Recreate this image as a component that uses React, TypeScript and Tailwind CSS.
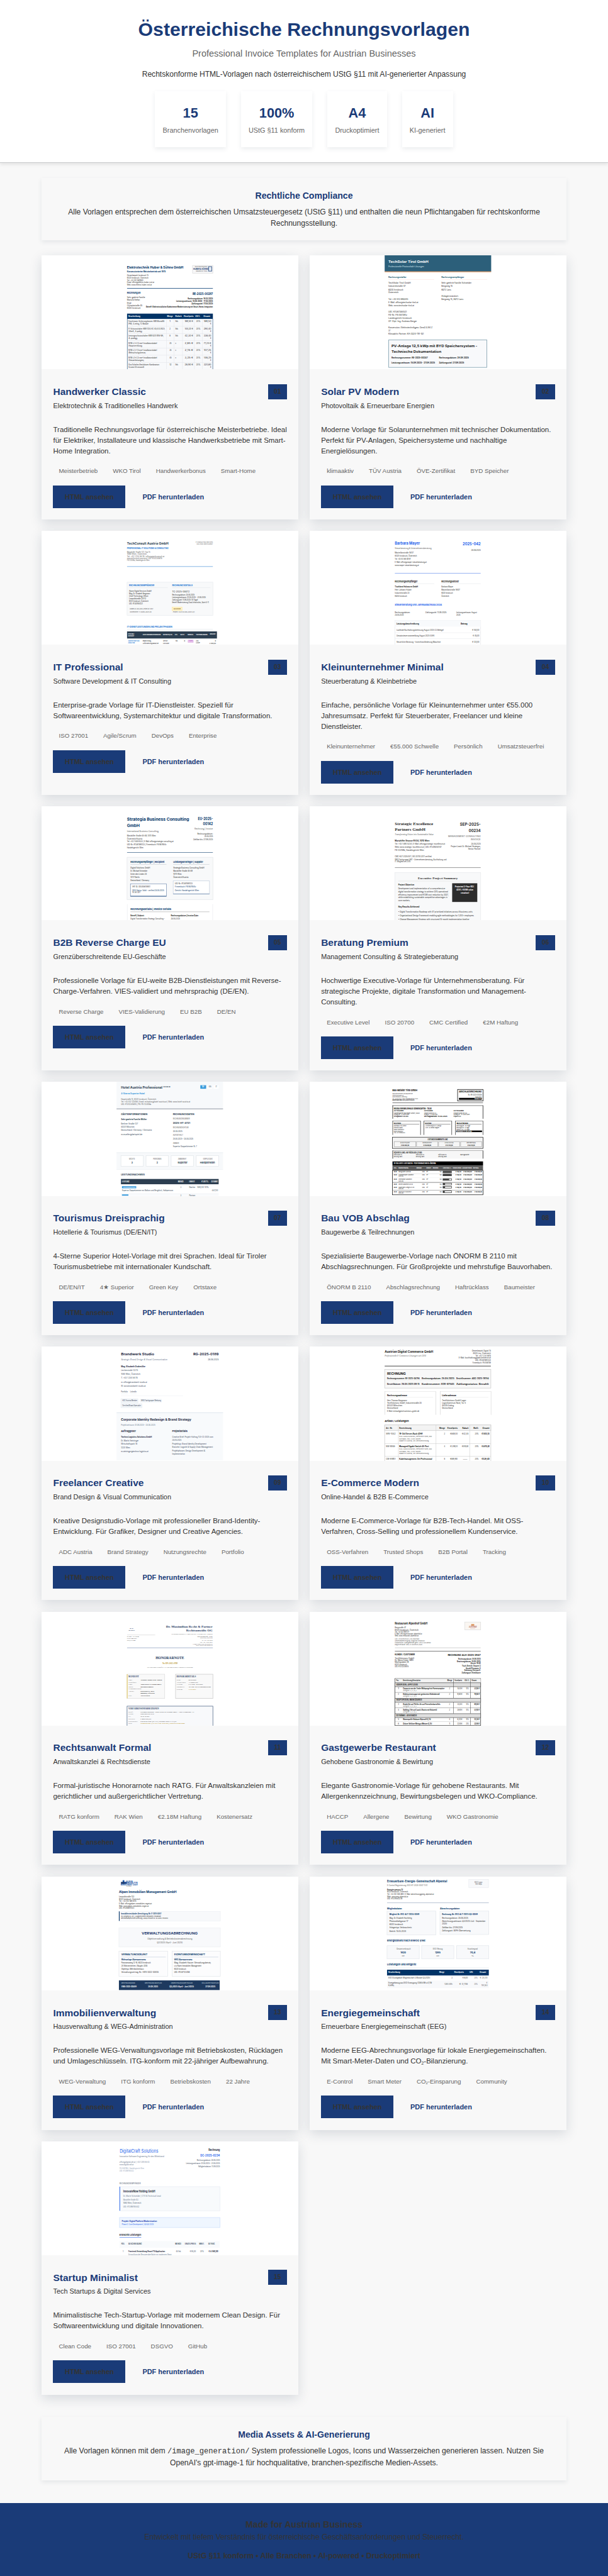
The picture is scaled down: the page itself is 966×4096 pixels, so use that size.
import React from "react";

/* ---------- invoice previews ---------- */

type Text = ["t", number, number, number, number, string, string?, string?];
type Rect = ["r", number, number, number, number, string, string?];
type Shape = Text | Rect;
type Grid = { ox: number; oy: number; sx: number; sy: number };

const NAVY = "#003366";
const INK = "#222222";
const GREY = "#555555";
const BLUE = "#2563eb";

const t = (
  x1: number,
  x2: number,
  y: number,
  size: number,
  text: string,
  color: string = INK,
  style: string = ""
): Shape => ["t", x1, x2, y, size, text, color, style];

const r = (x1: number, y1: number, x2: number, y2: number, fill: string, stroke?: string): Shape => [
  "r",
  x1,
  y1,
  x2,
  y2,
  fill,
  stroke,
];

/* column of left aligned text lines: [right edge, y, text] */
const lines = (x: number, size: number, color: string, rows: [number, number, string][], style = ""): Shape[] =>
  rows.map(([x2, y, s]) => t(x, x2, y, size, s, color, style));

/* column of right aligned text lines: [left edge, y, text] */
const linesR = (x: number, size: number, color: string, rows: [number, number, string][], style = ""): Shape[] =>
  rows.map(([x1, y, s]) => t(x1, x, y, size, s, color, style));

function Preview({ grid, shapes, label }: { grid: Grid; shapes: Shape[]; label: string }) {
  const { ox, oy, sx, sy } = grid;
  const X = (v: number) => (v - ox) / sx;
  const Y = (v: number) => (v - oy) / sy;
  return (
    <svg viewBox="0 0 540 240" aria-label={label} className="block h-[181.1px] w-full overflow-hidden bg-white">
      {shapes.map((s, i) => {
        if (s[0] === "r") {
          return (
            <rect
              key={i}
              x={X(s[1])}
              y={Y(s[2])}
              width={X(s[3]) - X(s[1])}
              height={Y(s[4]) - Y(s[2])}
              fill={s[5]}
              stroke={s[6] ?? "none"}
              strokeWidth={1}
            />
          );
        }
        const style = s[7] ?? "";
        return (
          <text
            key={i}
            x={X(s[1])}
            y={Y(s[3]) + s[4] * 0.35}
            fontSize={s[4]}
            fill={s[6]}
            fontWeight={style.includes("b") ? 700 : 400}
            fontStyle={style.includes("i") ? "italic" : "normal"}
            fontFamily={
              style.includes("s") ? "'Liberation Serif', serif" : "Inter, 'Liberation Sans', sans-serif"
            }
            textLength={X(s[2]) - X(s[1])}
            lengthAdjust="spacingAndGlyphs"
          >
            {s[5]}
          </text>
        );
      })}
    </svg>
  );
}

const handwerker: Shape[] = [
  t(263, 429, 118, 7, "Elektrotechnik Huber & Söhne GmbH", NAVY, "b"),
  t(263, 377, 140, 4.4, "Konzessionierter Meisterbetrieb seit 1975", NAVY, "b"),
  ...lines(263, 4, INK, [
    [326, 162, "Gewerbepark Innsbruck 15"],
    [326, 175, "6020 Innsbruck, Österreich"],
    [311, 188, "Tel: +43 512 987600"],
    [343, 200, "Email: office@elektro-huber-tirol.at"],
    [336, 213, "Web: www.elektro-huber-tirol.at"],
  ]),
  r(456, 106, 516, 149, "#f7f7f8", "#dddddd"),
  t(463, 500, 114, 2.6, "ELEKTROTECHNIK", GREY),
  t(458, 503, 126, 5, "HUBER & SÖHNE", "#1d3f75", "b"),
  t(466, 500, 137, 2.6, "INNSBRUCK TIROL", GREY),
  r(503, 112, 513, 137, "#dfe7f1", "#1d3f75"),
  r(263, 230, 516, 233, "#1e4e80"),
  t(263, 303, 258, 5, "Rechnung an", NAVY, "b"),
  t(456, 516, 262, 7, "RE-2025-00287", NAVY, "b"),
  ...lines(263, 4.4, INK, [
    [316, 282, "Sehr geehrte Familie"],
    [301, 297, "Maria & Stefan"],
    [276, 313, "Berger"],
    [308, 328, "Olympiastraße 45"],
    [303, 342, "6020 Innsbruck"],
  ]),
  ...linesR(516, 4.4, INK, [
    [442, 287, "Rechnungsdatum: 18.03.2025"],
    [408, 302, "Leistungszeitraum: 10.03.2025 – 17.03.2025"],
    [453, 317, "Zahlungsziel: 17.04.2025"],
    [319, 332, "Betreff: Elektroinstallation Badezimmer Modernisierung mit Smart-Home-Integration"],
  ], "b"),
  r(263, 371, 516, 677, "#f8f9fb"),
  r(263, 371, 516, 400, NAVY),
  t(267, 302, 387, 4, "Beschreibung", "#ffffff", "b"),
  t(381, 398, 387, 4, "Menge", "#ffffff", "b"),
  t(405, 424, 387, 4, "Einheit", "#ffffff", "b"),
  t(430, 459, 387, 4, "Einzelpreis", "#ffffff", "b"),
  t(464, 478, 387, 4, "USt%", "#ffffff", "b"),
  t(488, 508, 387, 4, "Gesamt", "#ffffff", "b"),
  ...([
    [414, 373, "Feuchtraum-Sicherungskasten ABB Mistral65", 326, "IP65, 4-reihig, 72 Module", "1", "Stk.", "189,50 €", "189,50"],
    [454, 375, "FI-Schutzschalter ABB F204 AC-40/0.03 NCA,", 308, "30mA, 4-polig)", "2", "Stk.", "145,20 €", "290,40"],
    [493, 371, "Leitungsschutzschalter ABB S201 B16-NA,", 294, "4-polig)", "8", "Stk.", "42,30 €", "338,40"],
    [533, 351, "NYM-J 3x2,5 mm² Installationskabel", 308, "(Hauptverteilung)", "25", "m", "2,85 €", "71,25 €"],
    [573, 351, "NYM-J 3x1,5 mm² Installationskabel", 318, "(Beleuchtungskreise)", "35", "m", "2,15 €", "107,25"],
    [613, 351, "NYM-J 5x2,5 mm² Installationskabel", 313, "(Steuerleitungen)", "45", "m", "3,25 €", "146,25"],
    [653, 358, "Gira Schalter/Steckdosen Kombination", 313, "System 55 reinweiß", "12", "Stk.", "28,90 €", "320,80"],
  ] as [number, number, string, number, string, string, string, string, string][]).flatMap(
    ([y, x2, a, x3, b, m, e, p, g]) => [
      r(264, y + 26, 516, y + 28, "#e3e6ea"),
      t(267, x2, y, 3.9, a),
      t(267, x3, y + 14, 3.9, b),
      t(388, 388 + m.length * 3, y, 3.9, m),
      t(405, 405 + e.length * 2.4, y, 3.9, e),
      t(433, 458, y, 3.9, p),
      t(467, 479, y, 3.9, "20%"),
      t(489, 511, y, 3.9, g),
      t(508, 511, y + 14, 3.9, "€"),
    ]
  ),
  ...[379, 401, 426, 461, 484].map((x) => r(x, 400, x + 1, 677, "#e3e6ea")),
  r(263, 400, 264.5, 677, "#4f7396"),
  r(515, 400, 516.5, 677, "#4f7396"),
];

const solar: Shape[] = [
  r(1022, 50, 1336, 139, "#2c5f7a"),
  r(1022, 139, 1336, 142, "#d2691e"),
  t(1033, 1151, 84, 7, "TechSolar Tirol GmbH", "#ffffff", "b"),
  t(1033, 1138, 112, 4.6, "Professionelle Photovoltaik-Lösungen", "#dbe8ef"),
  t(1033, 1086, 172, 4.8, "Rechnungssteller", "#2c5f7a", "b"),
  t(1189, 1256, 172, 4.8, "Rechnungsempfänger", "#2c5f7a", "b"),
  r(1033, 183, 1168, 185, "#fbe3e0"),
  r(1189, 183, 1324, 185, "#fbe3e0"),
  ...lines(1033, 4.7, INK, [
    [1099, 203, "TechSolar Tirol GmbH"],
    [1084, 220, "Industriestraße 47"],
    [1077, 238, "6020 Innsbruck"],
    [1063, 255, "Österreich"],
    [1091, 290, "Tel: +43 512 890245"],
    [1121, 308, "E-Mail: office@techsolar-tirol.at"],
    [1109, 325, "Web: www.techsolar-tirol.at"],
    [1087, 360, "UID: ATU67384521"],
    [1088, 378, "FB-Nr: FN 487391z"],
    [1102, 396, "Landesgericht Innsbruck"],
    [1117, 413, "GF: Dipl.-Ing. Andreas Berger"],
    [1163, 448, "Konzession: Elektrotechnikgew. GewO § 94 Z"],
    [1039, 466, "37"],
    [1137, 483, "Klimaaktiv Partner: KA-2024-TIR-101"],
  ]),
  ...lines(1189, 4.7, INK, [
    [1278, 203, "Sehr geehrte Familie Schneider"],
    [1222, 220, "Bergweg 15"],
    [1218, 238, "6072 Lans"],
    [1240, 273, "Anlagenstandort:"],
    [1254, 290, "Bergweg 15, 6072 Lans"],
  ]),
  r(1034, 516, 1323, 667, "#f8f9fb", "#7396a6"),
  t(1042, 1295, 548, 7, "PV-Anlage 12,5 kWp mit BYD Speichersystem -", INK, "b"),
  t(1042, 1189, 579, 7, "Technische Dokumentation", INK, "b"),
  t(1042, 1149, 614, 4.5, "Rechnungsnummer: RE-2025-00247", INK, "b"),
  t(1182, 1270, 614, 4.5, "Rechnungsdatum: 28.08.2025", INK, "b"),
  t(1042, 1170, 642, 4.5, "Leistungszeitraum: 15.08.2025 - 27.08.2025", INK, "b"),
  t(1182, 1256, 642, 4.5, "Zahlungsziel: 27.09.2025", INK, "b"),
];

const itPro: Shape[] = [
  t(263, 385, 120, 7, "TechConsult Austria GmbH", "#2c3e50", "b"),
  t(263, 385, 148, 4.4, "PROFESSIONAL IT SOLUTIONS & CONSULTING", "#1976d2", "b"),
  ...lines(263, 3.8, GREY, [
    [331, 168, "Mariahilfer Straße 123, Top 15"],
    [321, 179, "1060 Wien, Österreich"],
    [373, 191, "Tel: +43 1 234 56 78 | office@techconsult.at"],
    [366, 202, "www.techconsult-austria.at | UID: ATU12345678"],
    [329, 213, "FN 123456a, Handelsgericht Wien"],
  ]),
  t(465, 516, 111, 3.4, "IT CONSULTING SERVICES", GREY),
  t(468, 516, 123, 3.4, "ISO 27001 ZERTIFIZIERT", GREY),
  r(263, 246, 516, 248, "#2f80d0"),
  r(263, 333, 516, 516, "#f8f9fa", "#e9ecef"),
  t(269, 343, 351, 4.4, "RECHNUNGSEMPFÄNGER", "#1976d2", "b"),
  t(396, 456, 351, 4.4, "RECHNUNGSDETAILS", "#1976d2", "b"),
  r(269, 363, 383, 365, "#e3e7eb"),
  r(396, 363, 509, 365, "#e3e7eb"),
  ...lines(269, 4.2, INK, [
    [335, 382, "Alpine Digital Services GmbH"],
    [331, 397, "Mag. Dr. Elisabeth Bergmann"],
    [326, 411, "Chief Technology Officer"],
    [319, 425, "Leopoldstraße 101/12"],
    [326, 438, "6020 Innsbruck, Österreich"],
    [309, 452, "UID: ATU87654321"],
  ]),
  ...lines(396, 4.2, INK, [
    [447, 385, "TC-2025-08472"],
    [462, 404, "Rechnungsdatum: 28.08.2025"],
    [495, 418, "Leistungszeitraum: 01.08.2025 - 31.08.2025"],
    [472, 432, "Zahlungsziel: 11.09.2025 (14 Tage)"],
    [504, 446, "Betreff: Modernisierung Cloud-Infrastruktur, Sprint 8-11"],
  ]),
  r(396, 470, 425, 489, "#fff3cd", "#ffe8a1"),
  t(400, 421, 480, 3.4, "AGILE/SCRUM", "#856404", "b"),
  r(269, 475, 340, 487, "#f1f3f5"),
  t(271, 340, 481, 3.2, "Kunden-ID: ADS-2025 | Projekt-Nr: 0847", GREY),
  t(271, 335, 497, 3.2, "Kostenstelle: IT-INFRA-2025-08", GREY),
  t(398, 462, 497, 3.2, "Projekt: CLOUD-MIG-2025-Q3", GREY),
  t(263, 396, 579, 4.8, "IT-DIENSTLEISTUNGEN UND PROJEKTPHASEN", "#1976d2", "b"),
  r(263, 591, 516, 593, "#dfe3e8"),
  r(263, 604, 528, 643, "#2c3e50"),
  t(266, 284, 617, 3.6, "PHASE/", "#ffffff", "b"),
  t(266, 284, 630, 3.6, "SPRINT", "#ffffff", "b"),
  t(309, 362, 623, 3.6, "LEISTUNGSBESCHREIBUNG", "#ffffff", "b"),
  t(369, 397, 623, 3.6, "EXPERTE/LVL", "#ffffff", "b"),
  t(404, 412, 623, 3.6, "STD.", "#ffffff", "b"),
  t(420, 432, 623, 3.6, "SATZ", "#ffffff", "b"),
  t(442, 458, 623, 3.6, "MODUS", "#ffffff", "b"),
  t(466, 500, 623, 3.6, "TECHNOLOGIEN", "#ffffff", "b"),
  t(507, 524, 617, 3.6, "GESAMT", "#ffffff", "b"),
  t(266, 299, 657, 3.6, "ARCHITEKTUR", "#1976d2", "b"),
  t(266, 286, 668, 3.6, "ANALYSE", "#1976d2", "b"),
  t(309, 336, 657, 3.6, "Backlog-"),
  t(309, 356, 670, 3.6, "Anforderungsanalyse"),
  t(369, 383, 657, 3.6, "Senior"),
  t(369, 387, 670, 3.6, "Consultant"),
  t(405, 412, 657, 3.6, "16"),
  t(431, 434, 657, 3.6, "€"),
  r(443, 652, 458, 664, "#f3d6f5", "#d9a6dd"),
  t(445, 456, 658, 3.2, "FIXED", "#8e24aa"),
  t(466, 474, 655, 3.6, "AWS"),
  t(466, 478, 668, 3.6, "Azure"),
  t(522, 525, 657, 3.6, "€"),
  t(506, 525, 670, 3.6, "2.880,00"),
];

const klein: Shape[] = [
  t(1052, 1126, 121, 7.5, "Barbara Mayer", BLUE, "b"),
  t(1252, 1305, 124, 8, "2025-042", BLUE, "b"),
  t(1052, 1160, 146, 4.8, "Steuerberatung & Unternehmensberatung", GREY),
  t(1277, 1305, 155, 4.6, "28.08.2025"),
  ...lines(1052, 4.6, INK, [
    [1107, 170, "Maximilianstraße 16/07"],
    [1117, 188, "6020 Innsbruck, Österreich"],
    [1099, 205, "Tel: +43 512 560 89 97"],
    [1146, 222, "E-Mail: office@mayer-steuerberatung.at"],
    [1123, 239, "www.mayer-steuerberatung.at"],
  ]),
  r(1052, 282, 1305, 285, "#8aa9f2"),
  t(1052, 1119, 328, 5, "Rechnungsempfänger", INK, "b"),
  t(1189, 1241, 328, 5, "Rechnungssteller", INK, "b"),
  r(1052, 340, 1168, 342, "#e3e5e8"),
  r(1189, 340, 1305, 342, "#e3e5e8"),
  t(1052, 1120, 357, 4.7, "Tischlerei Holzwurm GmbH", INK, "b"),
  ...lines(1052, 4.7, INK, [
    [1101, 374, "Herr Johann Huber"],
    [1095, 391, "Industriestraße 23"],
    [1088, 408, "6020 Innsbruck"],
  ]),
  ...lines(1189, 4.7, INK, [
    [1224, 357, "Barbara Mayer"],
    [1244, 374, "Maximilianstraße 16/07"],
    [1223, 391, "6020 Innsbruck"],
    [1212, 408, "Österreich"],
  ]),
  t(1052, 1191, 458, 5.4, "Steuerberatung und Jahresabschluss 2024", BLUE, "b"),
  t(1052, 1097, 498, 4.3, "Rechnungsdatum:", INK),
  t(1052, 1078, 512, 4.3, "28.08.2025", INK),
  t(1142, 1204, 498, 4.3, "Zahlungsziel: 11.09.2025"),
  t(1233, 1294, 498, 4.3, "Leistungszeitraum: August"),
  t(1233, 1245, 512, 4.3, "2025"),
  r(1052, 543, 1305, 690, "#ffffff", "#e5e7eb"),
  r(1052, 543, 1305, 578, "#f8fafc"),
  t(1057, 1123, 561, 4.5, "Leistungsbeschreibung", INK, "b"),
  t(1246, 1266, 561, 4.5, "Betrag", INK, "b"),
  t(1057, 1196, 595, 4.3, "Laufende Buchhaltungsbetreuung August 2025 (23 Belege)"),
  t(1280, 1301, 595, 4.3, "€ 180,00"),
  r(1052, 610, 1305, 612, "#e9ebee"),
  t(1057, 1169, 628, 4.3, "Umsatzsteuervoranmeldung August 2025 (UVA)"),
  t(1282, 1301, 628, 4.3, "€ 45,00"),
  r(1052, 643, 1305, 645, "#e9ebee"),
  t(1057, 1187, 661, 4.3, "Steuerliche Beratung – Investitionsförderung Maschine"),
  t(1280, 1301, 661, 4.3, "€ 120,00"),
];

const b2b: Shape[] = [
  t(263, 446, 125, 8, "Strategia Business Consulting", NAVY, "b"),
  t(263, 300, 158, 8, "GmbH", NAVY, "b"),
  t(472, 516, 122, 7.4, "EU-2025-", NAVY, "b"),
  t(487, 516, 150, 7.4, "00142", NAVY, "b"),
  t(263, 356, 188, 4.8, "International Business Consulting", GREY),
  t(462, 516, 177, 4.8, "Rechnung | Invoice", GREY),
  ...lines(263, 4.3, INK, [
    [348, 214, "Mariahilfer Straße 85-89, 1070 Wien"],
    [308, 230, "Österreich/Austria"],
    [400, 247, "Tel: +43 1 585 9333 | E-Mail: office@strategia-consulting.at"],
    [379, 263, "UID-Nr: ATU67890123 | Firmenbuch: FN 987654v"],
    [311, 279, "Handelsgericht Wien"],
  ]),
  ...linesR(516, 4.3, INK, [
    [470, 203, "Rechnungsdatum:"],
    [491, 217, "28.08.2025"],
    [458, 234, "Zahlbar bis: 27.09.2025"],
  ]),
  r(263, 306, 516, 308, NAVY),
  r(263, 333, 516, 566, "#f8f9fa", "#e3e6ea"),
  t(273, 373, 358, 4.9, "Rechnungsempfänger | Recipient", NAVY, "b"),
  t(399, 487, 358, 4.9, "Leistungserbringer | Supplier", NAVY, "b"),
  r(273, 371, 379, 374, "#d5d9de"),
  r(399, 371, 506, 374, "#d5d9de"),
  ...lines(273, 4.5, INK, [
    [331, 392, "Digital Solutions GmbH"],
    [323, 409, "Dr. Michael Schneider"],
    [321, 426, "Unter den Linden 28"],
    [300, 443, "10117 Berlin"],
    [328, 461, "Deutschland / Germany"],
  ]),
  ...lines(399, 4.5, INK, [
    [491, 392, "Strategia Business Consulting GmbH"],
    [456, 409, "Mariahilfer Straße 85-89"],
    [424, 426, "1070 Wien"],
    [444, 443, "Österreich/Austria"],
  ]),
  r(273, 479, 379, 547, "#ffffff", "#7d95b5"),
  r(273, 546, 379, 549, "#33598c"),
  t(278, 331, 496, 4.3, "VAT ID: DE345678901"),
  t(278, 372, 514, 4.3, "VIES Status: Valid – verified 28.08.2025", NAVY),
  t(278, 303, 527, 4.3, "10:34 CET"),
  r(399, 463, 506, 535, "#ffffff", "#c5d0de"),
  r(399, 533, 506, 536, "#6f8bb0"),
  t(404, 456, 479, 4.3, "UID-Nr: ATU67890123"),
  t(404, 466, 496, 4.3, "Firmenbuch: FN 987654v", NAVY),
  t(404, 475, 514, 4.3, "Gericht: Handelsgericht Wien", NAVY),
  r(263, 591, 264, 690, "#e3e6ea"),
  r(515, 591, 516, 690, "#e3e6ea"),
  t(273, 393, 619, 4.9, "Rechnungsdetails | Invoice Details", NAVY, "b"),
  r(273, 631, 506, 635, "#cfcfcf"),
  t(273, 314, 653, 4.3, "Betreff | Subject:", INK, "b"),
  t(392, 474, 653, 4.3, "Rechnungsdatum | Invoice Date:", INK, "b"),
  t(273, 374, 670, 4.3, "Digital Transformation Strategy Consulting –"),
  t(392, 419, 670, 4.3, "28.08.2025"),
];

const beratung: Shape[] = [
  t(1052, 1165, 148, 8.4, "Strategic Excellence", "#2c2c2c", "bs"),
  t(1052, 1142, 181, 8.4, "Partners GmbH", "#2c2c2c", "bs"),
  t(1244, 1305, 150, 8.4, "SEP-2025-", "#2c2c2c", "b"),
  t(1270, 1305, 185, 8.4, "00234", "#2c2c2c", "b"),
  t(1052, 1166, 209, 4.4, "Transforming Vision into Sustainable Value", GREY, "i"),
  t(1209, 1305, 217, 4.6, "MANAGEMENT CONSULTING", GREY),
  t(1276, 1305, 234, 4.6, "INVOICE", GREY),
  t(1052, 1154, 243, 4.3, "Mariahilfer Strasse 88/34, 1070 Wien", INK, "b"),
  ...lines(1052, 4.3, INK, [
    [1200, 260, "Tel: +43 1 890 5234 | E-Mail: office@strategic-excellence.at"],
    [1190, 278, "Web: www.strategic-excellence.at | UID: ATU09250147"],
    [1138, 295, "FN 123789b, Handelsgericht Wien"],
    [1160, 329, "CMC-AUT-2025/047 | ISO 20700:2017 certified"],
    [1204, 345, "WKO Fachgruppe UBIT – Unternehmensberatung, Buchhaltung und"],
    [1098, 358, "IT: Mitglied seit 2015"],
  ]),
  ...linesR(1305, 4.3, INK, [
    [1277, 259, "28.08.2025"],
    [1217, 273, "Project Lead: Dr. Michael Strategos,"],
    [1268, 287, "Senior Partner"],
  ]),
  r(1052, 389, 1305, 391.5, "#777777"),
  r(1052, 417, 1305, 700, "#f8f9fa", "#e8eaed"),
  t(1120, 1237, 447, 6.2, "Executive Project Summary", "#2c2c2c", "bs"),
  r(1062, 463, 1295, 465, "#dddddd"),
  t(1062, 1109, 484, 4.5, "Project Objective", INK, "b"),
  ...lines(1062, 4.4, INK, [
    [1200, 506, "Development and implementation of a comprehensive"],
    [1209, 522, "digital transformation strategy to achieve 20% operational"],
    [1210, 538, "efficiency improvement and €12M cost reduction by 2027,"],
    [1207, 555, "while establishing sustainable competitive advantages in"],
    [1097, 571, "core markets."],
  ]),
  r(1221, 476, 1295, 579, "#2c2c2c"),
  t(1229, 1286, 496, 4.5, "Projected 3-Year ROI:", "#ffffff", "b"),
  t(1233, 1283, 512, 4.5, "425% (€51M value", "#ffffff", "b"),
  t(1246, 1271, 528, 4.5, "creation)", "#ffffff", "b"),
  t(1062, 1124, 605, 4.5, "Key Results Achieved", INK, "b"),
  t(1062, 1281, 632, 4.3, "•  Digital Transformation Roadmap with 47 prioritized initiatives across 6 business units"),
  t(1062, 1285, 654, 4.3, "•  Organizational Design Framework enabling agile methodologies for 1.200+ employees"),
  t(1062, 1271, 675, 4.3, "•  Change Management Strategy with structured 18-month implementation timeline"),
];

const tourismus: Shape[] = [
  r(232, 54, 546, 207, "#f7f9fb"),
  r(232, 207, 546, 210, "#75808c"),
  t(245, 391, 88, 6.6, "Hotel Austria Professional ****", "#2c3e50", "b"),
  r(479, 74, 496, 94, "#3498db"),
  t(484, 491, 84, 3.8, "DE", "#ffffff", "b"),
  r(500, 74, 514, 94, "#ffffff"),
  t(504, 511, 84, 3.8, "EN", "#2c3e50"),
  r(518, 74, 533, 94, "#ffffff"),
  t(524, 528, 84, 3.8, "IT", "#2c3e50"),
  t(245, 315, 123, 4.5, "4-Sterne Superior Hotel", "#3498db", "b"),
  ...lines(245, 4.3, GREY, [
    [349, 153, "Hauptstraße 15, 6020 Innsbruck, Österreich"],
    [449, 167, "Tel: +43 512 123456 | Email: reception@hotel-austria.at | Web: www.hotel-austria.at"],
    [334, 181, "UID: ATU12345678 | FN: FN 123456a"],
  ]),
  t(245, 323, 239, 4.4, "GÄSTEINFORMATIONEN", "#2c3e50", "b"),
  t(398, 461, 239, 4.4, "RECHNUNGSDATEN", "#2c3e50", "b"),
  t(245, 321, 269, 4.4, "Sehr geehrte Familie Müller", "#2c3e50", "b"),
  ...lines(245, 4.4, "#2c3e50", [
    [295, 294, "Berliner Straße 127"],
    [285, 313, "80331 München"],
    [336, 329, "Deutschland / Germany / Germania"],
    [308, 355, "m.mueller@beispiel.de"],
  ]),
  t(398, 448, 266, 3.9, "RECHNUNGSNUMMER", GREY),
  t(398, 449, 290, 5.4, "2025-HT-4721", "#2c3e50", "b"),
  t(398, 444, 317, 3.9, "RECHNUNGSDATUM", GREY),
  t(398, 426, 336, 4.4, "28.08.2025", "#2c3e50"),
  t(398, 428, 360, 3.9, "AUFENTHALT", GREY),
  t(398, 458, 379, 4.4, "25.08.2025 – 28.08.2025", "#2c3e50"),
  t(398, 416, 404, 3.9, "ZIMMER", GREY),
  t(398, 469, 421, 4.4, "Superior Doppelzimmer N. 7", "#2c3e50"),
  r(232, 457, 546, 553, "#f7f9fb"),
  r(232, 457, 546, 460, "#e8ecef"),
  r(232, 552, 546, 554, "#e8ecef"),
  ...([
    [245, "NÄCHTE", 269, 286, "3", 276, 280],
    [319, "PERSONEN", 340, 364, "2", 350, 354],
    [393, "ZIMMERKAT.", 413, 439, "Superior", 412, 441],
    [467, "VERPFLEGUNG", 487, 515, "Halbpension", 478, 522],
  ] as [number, string, number, number, string, number, number][]).flatMap(([x, a, a1, a2, b, b1, b2]) => [
    r(x, 475, x + 66, 536, "#ffffff", "#e3e7ea"),
    t(a1, a2, 493, 3.7, a, GREY),
    t(b1, b2, 515, 5, b, "#2c3e50", "b"),
  ]),
  t(245, 315, 583, 4.6, "LEISTUNGSNACHWEIS", "#2c3e50", "b"),
  r(245, 608, 533, 638, "#2c3e50"),
  t(248, 270, 623, 3.8, "LEISTUNG", "#ffffff", "b"),
  t(413, 430, 623, 3.8, "MENGE", "#ffffff", "b"),
  t(446, 463, 623, 3.8, "EINHEIT", "#ffffff", "b"),
  t(482, 503, 623, 3.8, "€  UST%", "#ffffff", "b"),
  t(511, 531, 623, 3.8, "GESAMT", "#ffffff", "b"),
  r(248, 649, 290, 661, "#3498db"),
  t(251, 287, 655, 3.4, "ACCOMMODATION", "#ffffff"),
  t(248, 399, 672, 4, "Superior Doppelzimmer mit Balkon und Bergblick, Halbpension", "#2c3e50"),
  t(420, 423, 656, 4, "3", "#2c3e50"),
  t(446, 464, 656, 4, "Nächte", "#2c3e50"),
  t(469, 504, 656, 4, "149,00  10%", "#2c3e50"),
  t(513, 531, 672, 4, "447,00", "#2c3e50"),
  r(245, 688, 533, 703, "#f7f9fb"),
  r(248, 696, 267, 703, "#3498db"),
  t(420, 423, 701, 4, "3", "#2c3e50"),
  t(446, 464, 701, 4, "Portion", "#2c3e50"),
];

const bau: Shape[] = [
  t(1045, 1118, 104, 5.2, "Bau-Meister Tirol GmbH", "#000000", "b"),
  ...lines(1045, 3.2, GREY, [
    [1105, 121, "Bauunternehmen und Baumeister"],
    [1078, 135, "Industriestraße 45"],
    [1088, 142, "6020 Innsbruck, Österreich"],
    [1120, 152, "Tel: +43 512 1234 | E-Mail: office@baumeister-tirol.at"],
  ]),
  t(1045, 1110, 159, 3.2, "Konzession BM-1234 | UID ATU12345", "#000000", "b"),
  r(1237, 98, 1312, 164, "#ffffff", "#000000"),
  t(1241, 1308, 112, 4.8, "ABSCHLAGSRECHNUNG", "#000000", "b"),
  t(1268, 1308, 128, 4, "Nr. AR-2025-00408"),
  t(1289, 1308, 142, 4, "28.08.2025"),
  r(1241, 146, 1308, 157, "#000000"),
  t(1287, 1306, 152, 3.4, "ÖNORM B 2110", "#ffffff", "b"),
  r(1045, 173, 1312, 175.5, "#444444"),
  r(1045, 189, 1312, 191, "#222222"),
  r(1045, 189, 1046.5, 265, "#222222"),
  r(1311, 189, 1312.5, 265, "#222222"),
  t(1049, 1161, 206, 4.4, "NEUBAU EINFAMILIENHAUS SONNENGARTEN - TEILW.", "#000000", "b"),
  ...[
    [1049, 1078, 1125, 1094, 1092],
    [1138, 1164, 1174, 1178, 1207],
    [1225, 1255, 1265, 1273, 1247],
  ].flatMap(([x, a, b, c, d]) => [
    t(x, a, 220, 3.4, "AUFTRAGGEBER", "#000000", "b"),
    t(x, b, 233, 3.2, "Sonnengarten Bauträger GmbH, 6020"),
    t(x, c, 242, 3.2, "Auftrag-Nr.: VT-2025-0091"),
    t(x, d, 251, 3.2, "Vertragsdatum: 15.03.2025", "#000000", "b"),
  ]),
  ...([
    [1045, 1128, 1070],
    [1137, 1220, 1160],
    [1230, 1312, 1268],
  ] as [number, number, number][]).flatMap(([a, b, c]) => [
    r(a, 277, b, 279, "#444444"),
    r(a, 277, a + 1.5, 357, "#444444"),
    r(b - 1, 277, b + 0.5, 357, "#444444"),
    t(a + 4, c, 289, 3.6, "BAUHERR", "#000000", "b"),
    r(a + 4, 295, b - 4, 297, "#555555"),
  ]),
  ...lines(1049, 3.3, INK, [
    [1086, 306, "Wohnbau Tirol GmbH"],
    [1075, 317, "Direktion Planer"],
    [1079, 327, "Maria-Theresien 6"],
    [1076, 337, "6020 Innsbruck"],
    [1082, 346, "UID: ATU78901234"],
  ]),
  t(1142, 1189, 306, 3.3, "Architekturbüro FTI-Design"),
  t(1142, 1183, 317, 3.3, "Arch. DI Stefan Wagner"),
  t(1233, 1274, 306, 3.3, "Zahlungsziel: 30 Tage"),
  t(1233, 1271, 317, 3.3, "Zahlungsfrist: 14 Tage"),
  t(1233, 1272, 327, 3.3, "Skonto: 2% / 14 Tage"),
  r(1233, 332, 1309, 341, "#000000"),
  t(1234, 1280, 337, 3.2, "Haftrücklass 5% bis Fertigst.", "#ffffff", "b"),
  r(1045, 370, 1312, 434, "#f3f3f3", "#222222"),
  t(1149, 1208, 384, 3.9, "LEISTUNGSZUSAMMENSTELLUNG", "#000000", "b"),
  ...([
    [1050, 1114, "GESAMTAUFTRAGSWERT", "€ 485.000,00"],
    [1116, 1179, "BISHER GELEISTET", "€ 218.000,00"],
    [1181, 1243, "AKTUELLE LEISTUNG", "€ 127.450,00"],
    [1246, 1308, "RESTBETRAG", "€ 139.550,00"],
  ] as [number, number, string, string][]).flatMap(([a, b, c, d]) => [
    r(a, 395, b, 425, "#f6f6f6", "#aaaaaa"),
    t(a + 18, b - 18, 404, 2.8, c),
    t(a + 20, b - 20, 416, 3.6, d, "#000000", "b"),
  ]),
  r(1045, 447, 1312, 492, "#f7f7f7"),
  r(1045, 446, 1312, 448, "#777777"),
  r(1045, 446, 1046.5, 492, "#222222"),
  r(1311, 446, 1312.5, 492, "#222222"),
  t(1049, 1133, 457, 3.8, "SICHERSTELLUNG / HAFTRÜCKLASS § 27 ABS.", "#000000", "b"),
  ...[1049, 1114, 1180].flatMap((x) => [
    t(x, x + 25, 470, 3, "Haftrücklass 5%"),
    t(x, x + 25, 481, 3, "Deckung: Bank"),
  ]),
  t(1245, 1271, 470, 3, "Bankgarantie"),
  r(1045, 508, 1312, 531, "#000000"),
  t(1049, 1173, 519, 3.8, "DETAILLIERTE LEISTUNGEN - POSITIONSNACHWEIS (ÖNORM)", "#ffffff", "b"),
  r(1045, 531, 1312, 559, "#5c5c5c"),
  ...([
    [1049, 1057, "POS."],
    [1063, 1092, "BEZEICHNUNG"],
    [1116, 1131, "MENGE"],
    [1145, 1159, "EINHEIT"],
    [1164, 1180, "BISHER"],
    [1194, 1218, "LEISTUNG %"],
    [1223, 1248, "EINZELPREIS"],
    [1251, 1279, "GESAMTPREIS"],
    [1283, 1299, "BETRAG"],
  ] as [number, number, string][]).map(([a, b, s]) => t(a, b, 545, 3.3, s, "#ffffff", "b")),
  r(1045, 559, 1312, 698, "#ffffff", "#111111"),
  r(1046, 626, 1311, 629, "#777777"),
  r(1046, 577, 1311, 579, "#d0d0d0"),
  r(1046, 601, 1311, 602, "#dddddd"),
  r(1046, 671, 1311, 673, "#777777"),
  ...([
    [568, 1099, "Baugrube Aushub", 24],
    [585, 1107, "Fundamentplatte Stahlbeton", 24],
    [611, 1102, "Kellerwände Stahlbeton", 18],
    [637, 1105, "Decken Stahlbeton C25/30", 6],
    [655, 1109, "Mauerwerk Ziegel 25 cm", 6],
    [681, 1102, "Dachstuhl Holzkonstr.", 5],
  ] as [number, number, string, number][]).flatMap(([y, x2, s, w]) => [
    t(1049, 1058, y, 3.3, "01.01", "#000000", "b"),
    t(1063, x2, y, 3.3, s),
    t(1132, 1140, y, 3.3, "450"),
    t(1145, 1150, y, 3.3, "m²"),
    t(1184, 1190, y, 3.3, "100"),
    r(1194, y - 5, 1219, y + 5, "#ffffff", "#333333"),
    r(1194, y - 4, 1194 + w, y + 4, "#333333"),
    t(1231, 1248, y, 3.3, "€ 48,50", "#000000", "b"),
    t(1254, 1279, y, 3.3, "€ 18.500,00", "#000000", "b"),
    t(1287, 1309, y, 3.3, "€ 18.500,00", "#000000", "b"),
  ]),
  ...[593, 619, 663, 690].map((y) => t(1063, 1077, y, 3.3, "C25/30")),
];

const freelancer: Shape[] = [
  t(245, 343, 91, 7, "Brandwerk Studio", "#1f2a44", "b"),
  t(458, 533, 91, 7, "RG-2025-0189", "#1f2a44", "b"),
  t(245, 382, 124, 4.6, "Strategic Brand Design & Visual Communication", "#64748b", "i"),
  t(501, 533, 124, 4.6, "28.08.2025", "#334155"),
  t(245, 317, 162, 4.6, "Mag. Elisabeth Grabmüller", "#1f2a44", "b"),
  ...lines(245, 4.6, "#334155", [
    [295, 184, "Lerchenstraße 122/15"],
    [302, 207, "1080 Wien, Österreich"],
    [294, 229, "T: +43 1 234 56 78"],
    [322, 253, "m: office@brandwerk-studio.at"],
    [318, 275, "W: www.brandwerk-studio.at"],
  ]),
  t(245, 265, 307, 4.2, "Portfolio", "#334155"),
  t(272, 291, 307, 4.2, "LinkedIn", "#334155"),
  r(245, 317, 265, 319, "#e2e8f0"),
  r(272, 317, 291, 319, "#e2e8f0"),
  r(245, 330, 428, 332, "#eef1f5"),
  r(245, 347, 295, 369, "#f4f7fa", "#e6ebf1"),
  r(301, 347, 365, 369, "#f4f7fa"),
  r(245, 375, 307, 397, "#f4f7fa", "#e6ebf1"),
  t(249, 293, 358, 3.7, "ADC Austria Member", "#334155"),
  t(304, 363, 358, 3.7, "WKO Fachgruppe Werbung", "#334155"),
  t(249, 304, 386, 3.7, "Certified Brand Specialist", "#334155"),
  r(232, 425, 546, 697, "#f8fafc"),
  r(232, 424, 546, 428, "#e2e8f0"),
  t(245, 452, 467, 6.2, "Corporate Identity Redesign & Brand Strategy", "#1f2a44", "b"),
  t(245, 346, 496, 4.4, "Projektzeitraum: 01.06.2025 – 28.08.2025", "#64748b"),
  t(245, 289, 533, 4.9, "Auftraggeber", "#1f2a44", "b"),
  t(396, 441, 533, 4.9, "Projektdetails", "#1f2a44", "b"),
  t(245, 336, 565, 4.5, "Techno Logistics Solutions GmbH", "#1f2a44", "b"),
  ...lines(245, 4.5, "#334155", [
    [297, 585, "Dr. Martin Steininger"],
    [293, 605, "Wirtschaftspark 16"],
    [272, 626, "1220 Wien"],
    [326, 647, "m.steininger@techno-logistics.at"],
  ]),
  ...lines(396, 4.5, "#334155", [
    [517, 565, "Creative Brief: Projekt-Auftrag TLS-CI-2025 vom"],
    [423, 582, "28.05.2025"],
    [497, 603, "Projekttyp: Brand Identity Development"],
    [516, 623, "Branche: Logistik & Supply Chain Management"],
    [493, 644, "Projektphasen: Design Development &"],
    [434, 662, "Implementation"],
  ]),
];

const ecommerce: Shape[] = [
  t(1022, 1165, 80, 6, "Austrian Digital Commerce GmbH", "#111111", "b"),
  t(1022, 1144, 101, 4.2, "Professionelle E-Commerce Lösungen seit 2014", GREY, "i"),
  ...linesR(1335, 4.1, INK, [
    [1279, 74, "Gewerbepark Digital 15"],
    [1282, 87, "4020 Linz, Österreich"],
    [1290, 101, "Tel: +43 1 234 5678"],
    [1240, 114, "E-Mail: buchhaltung@adcommerce.at"],
    [1289, 128, "UID: ATU67891234"],
    [1281, 141, "Firmenbuch: FN 456789"],
  ]),
  r(1022, 159, 1335, 162, "#222222"),
  r(1022, 180, 1335, 286, "#f8f8f8", "#cccccc"),
  t(1029, 1084, 205, 6.2, "RECHNUNG", "#111111", "b"),
  t(1029, 1125, 232, 4.2, "Rechnungsnummer: RE-2025-04794", INK, "b"),
  t(1131, 1227, 232, 4.2, "Rechnungsdatum:  28.08.2025", INK, "b"),
  t(1233, 1329, 232, 4.2, "Bestellnummer:  ADC-2025-19784", INK, "b"),
  r(1029, 241, 1329, 242, "#dddddd"),
  t(1029, 1125, 263, 4.2, "Bestelldatum:  26.08.2025 09:15", INK, "b"),
  t(1131, 1227, 263, 4.2, "Kundennummer:  B2B-67845", INK, "b"),
  t(1233, 1329, 263, 4.2, "Zahlungsstatus:  Bezahlt", INK, "b"),
  ...([
    [1022, 1172],
    [1185, 1335],
  ] as [number, number][]).flatMap(([a, b]) => [
    r(a, 304, b, 306, "#dddddd"),
    r(a, 304, a + 1, 438, "#cccccc"),
    r(b, 304, b + 1, 438, "#cccccc"),
    r(a + 7, 338, b - 7, 340, "#e4e4e4"),
  ]),
  t(1029, 1088, 327, 4.7, "Rechnungsadresse", "#111111", "b"),
  t(1191, 1233, 327, 4.7, "Lieferadresse", "#111111", "b"),
  ...lines(1029, 4.2, INK, [
    [1088, 356, "Herr Thomas Bergmann"],
    [1131, 370, "TechSolutions GmbH, Industriestraße 28"],
    [1074, 385, "80331 München"],
    [1061, 399, "Deutschland"],
    [1124, 419, "E-Mail: einkauf@techsolutions-gmbh.de"],
  ]),
  ...lines(1191, 4.2, INK, [
    [1262, 356, "TechSolutions GmbH Lager"],
    [1261, 370, "Logistikzentrum Nord, Tor 5"],
    [1226, 385, "85305 Erding"],
    [1223, 399, "Deutschland"],
  ]),
  t(1022, 1093, 474, 5, "Artikel / Leistungen", "#111111", "b"),
  r(1022, 496, 1335, 710, "#ffffff", "#cccccc"),
  r(1022, 496, 1335, 528, "#f3f3f3", "#cccccc"),
  t(1026, 1045, 513, 4.1, "Art.-Nr.", INK, "b"),
  t(1065, 1101, 513, 4.1, "Bezeichnung", INK, "b"),
  t(1183, 1200, 513, 4.1, "Menge", INK, "b"),
  t(1207, 1237, 513, 4.1, "Einzelpreis", INK, "b"),
  t(1251, 1269, 513, 4.1, "Rabatt", INK, "b"),
  t(1284, 1299, 513, 4.1, "MwSt.", INK, "b"),
  t(1310, 1331, 513, 4.1, "Gesamt", INK, "b"),
  ...([
    [546, "SRV-1042", 1134, "19-Zoll Server-Rack 42HE", "2", "€849,00", "€42,45", "€1.655,55"],
    [618, "NW-SW48-", 1152, "Managed Gigabit Switch 48-Port", "4", "€1.299,00", "€519,60", "€4.676,40"],
    [691, "CM-KAB01", 1162, "Kabelmanagement-Set Professional", "6", "€89,90", "-", "€539,40"],
  ] as [number, string, number, string, string, string, string, string][]).flatMap(([y, n, x2, s, m, e, ra, g]) => [
    t(1026, 1054, y, 4, n),
    t(1065, x2, y, 4.1, s, "#111111", "b"),
    t(1197, 1200, y, 4, m),
    t(1215, 1237, y, 4, e),
    t(1250, 1269, y, 4, ra),
    t(1288, 1299, y, 4, "20%"),
    t(1308, 1331, y, 4, g, "#111111", "b"),
    r(1022, y + 55, 1335, y + 57, "#cccccc"),
  ]),
  ...[562, 635].flatMap((y) => [
    t(1065, 1161, y - 1, 3.5, "EAN: 4260123456789 | Perforierte Türen, 800", GREY),
    t(1065, 1128, y + 13, 3.5, "Schwarz, inkl. 4 Stk. Rollen", GREY),
    t(1065, 1152, y + 24, 3.5, "Made in Austria, CE-Kennzeichnung", GREY),
  ]),
  r(1062, 496, 1063, 700, "#cccccc"),
  r(1173, 496, 1174, 700, "#cccccc"),
  r(1272, 496, 1273, 700, "#cccccc"),
];

const anwalt: Shape[] = [
  t(271, 282, 137, 3.4, "RAK", "#1a365d", "bs"),
  t(267, 286, 147, 3.4, "WIEN", "#1a365d", "bs"),
  t(378, 515, 126, 6.4, "Dr. Maximilian Recht & Partner", "#1a365d", "bs"),
  t(437, 515, 147, 6.4, "Rechtsanwälte OG", "#1a365d", "bs"),
  t(394, 515, 167, 3.7, "Rechtsanwaltskanzlei • Familienrecht • Vertragsrecht • Konkurs", GREY, "s"),
  r(263, 173, 346, 176, "#dddddd"),
  ...lines(263, 3.3, INK, [
    [298, 184, "R-Code: AUT12345"],
    [292, 194, "DVR: 0457891"],
    [288, 203, "Wien, RAK 2025"],
  ], "s"),
  ...linesR(515, 3.7, INK, [
    [470, 181, "Rotenturmstraße 12/25"],
    [478, 190, "1010 Wien, Österreich"],
    [483, 205, "Tel: +43 1 512 34 56"],
    [478, 214, "Fax: +43 1 512 34 57"],
    [457, 225, "E-Mail: kanzlei@recht-partner.at"],
    [466, 234, "Web: www.recht-partner.at"],
  ], "s"),
  r(263, 246, 516, 249, "#9aaac4"),
  t(347, 431, 304, 7.4, "HONORARNOTE", "#1a365d", "bs"),
  t(367, 412, 334, 4.8, "Nr. HN-2025-0789", "#b8962e", "bs"),
  t(322, 457, 357, 3.7, "zur Kostennote gemäß RATG und angewandter Honorarvereinbarung", GREY, "s"),
  r(263, 398, 374, 536, "#f9f9f9", "#dddddd"),
  r(262, 398, 265, 536, "#e6d48f"),
  r(406, 398, 516, 536, "#f9f9f9", "#c9c9c9"),
  t(267, 298, 412, 4.2, "MANDANT", "#1a365d", "bs"),
  t(409, 466, 412, 4.2, "HONORARDETAILS", "#1a365d", "bs"),
  ...lines(267, 3.5, GREY, [
    [279, 430, "Name:"],
    [291, 443, "Geschäftsführer:"],
    [279, 455, "Firma:"],
    [281, 468, "Funktion:"],
    [306, 481, "Zeichnungsberechtigt:"],
    [284, 493, "Adresse:"],
    [277, 520, "UID:"],
  ], "s"),
  ...lines(302, 3.5, INK, [
    [366, 430, "Alexander Thomas Mag. Stimson"],
    [364, 455, "Alpine Resort & Holding GmbH"],
    [341, 468, "Geschäftsführer"],
    [343, 493, "Seestraße 8, 4810"],
    [344, 507, "Gmunden, Österreich"],
    [330, 520, "ATU12345678"],
  ], "bs"),
  ...lines(409, 3.5, GREY, [
    [421, 430, "Datum:"],
    [436, 443, "Aktenzeichen:"],
    [427, 455, "Zeitraum:"],
    [433, 468, "Zahlungsziel:"],
    [427, 484, "Fällig am:"],
  ], "s"),
  ...lines(444, 3.5, INK, [
    [467, 430, "28.08.2025"],
    [472, 443, "AZ 2025/0789"],
    [486, 455, "01.07.2025 - 28.08.2025"],
    [510, 468, "14 Tage ab Rechnungsdatum"],
  ], "s"),
  t(444, 466, 484, 3.5, "11.09.2025", "#b8962e", "bs"),
  r(263, 580, 516, 720, "#f8f9fb", "#4c6485"),
  t(267, 357, 594, 4.2, "VERFAHRENSINFORMATIONEN", "#1a365d", "bs"),
  ...lines(267, 3.5, GREY, [
    [281, 612, "Betreff:"],
    [282, 625, "Gericht:"],
    [274, 638, "GZ:"],
    [287, 652, "Streitwert:"],
    [295, 665, "Kostenersatz:"],
    [278, 679, "Status:"],
  ], "s"),
  ...lines(302, 3.5, INK, [
    [461, 612, "Vertragsrechtssache Alpine Resort & Holding GmbH ./. Bau-Technologie AG"],
    [342, 625, "Handelsgericht Wien"],
    [329, 638, "34 Cg 123/25v"],
    [334, 652, "€ 485.000,00"],
    [409, 665, "Kostenersatz gem. § 41 ZPO, Kostennote gem. RATG § 23"],
  ], "s"),
  t(302, 433, 679, 3.5, "Vollmacht gem. § 30 ZPO vom 12.06.2025, Honorarvereinbarung", "#b8962e", "bs"),
];

const gastro: Shape[] = [
  t(1052, 1148, 111, 5.6, "Restaurant Alpenhof GmbH", "#111111", "b"),
  r(1258, 101, 1305, 145, "#faf6f2", "#dddddd"),
  r(1277, 113, 1286, 121, "#d98a4b"),
  t(1270, 1294, 129, 4.2, "ALPENHOF", "#a5483a", "bs"),
  t(1275, 1289, 137, 2.6, "RESTAURANT", "#a5483a", "s"),
  ...lines(1052, 4, INK, [
    [1085, 132, "Bergstraße 47"],
    [1122, 145, "6020 Innsbruck, Österreich"],
    [1094, 157, "Tel: +43 512 890727"],
    [1132, 169, "E-Mail: office@restaurant-alpenhof.at"],
    [1122, 180, "Web: www.restaurant-alpenhof.at"],
  ]),
  ...lines(1052, 3.5, GREY, [
    [1124, 198, "UID: ATU67845123 | FN 456789z"],
    [1140, 209, "Gewerbeberechtigung: Magistrat Innsbruck"],
    [1158, 219, "Konzession: Gastgewerbe gem. § 94 Z 26 GewO"],
    [1133, 229, "Registrierkasse: REG-AT-0047845-2025"],
  ]),
  r(1052, 246, 1305, 249, "#c9c9c9"),
  r(1052, 265, 1305, 268, "#666666"),
  t(1052, 1111, 287, 4.8, "KUNDE / CUSTOMER", "#111111", "b"),
  t(1208, 1305, 290, 5.3, "RECHNUNG ALH-2025-2847", "#111111", "b"),
  ...lines(1052, 4, INK, [
    [1109, 307, "TechSolutions GmbH"],
    [1107, 319, "Dr. Maria Huber, MBA"],
    [1093, 331, "Marktgraben 18"],
    [1088, 343, "6020 Innsbruck"],
    [1092, 356, "UID: ATU12345678"],
  ]),
  ...linesR(1305, 4, INK, [
    [1239, 312, "Rechnungsdatum: 28.08.2025"],
    [1235, 325, "Bewirtungsdatum: 28.08.2025"],
    [1275, 338, "Uhrzeit: 19:30"],
    [1250, 351, "Tisch-Bereich: Separee 3"],
    [1261, 364, "Anzahl Personen: 8"],
    [1257, 377, "Bedienung: Christian H."],
    [1249, 389, "Zahlungsart: Kreditkarte"],
  ], "b"),
  r(1052, 423, 1305, 700, "#ffffff", "#333333"),
  r(1053, 424, 1305, 447, "#f3f3f3"),
  t(1056, 1064, 435, 3.7, "Pos.", INK, "b"),
  t(1076, 1128, 435, 3.7, "Bezeichnung/Description", INK, "b"),
  t(1207, 1221, 435, 3.7, "Menge", INK, "b"),
  t(1228, 1250, 435, 3.7, "Einzelpreis", INK, "b"),
  t(1258, 1271, 435, 3.7, "USt.%", INK, "b"),
  t(1278, 1293, 435, 3.7, "Gesamt", INK, "b"),
  ...([
    [458, "VORSPEISEN / APPETIZERS", 1120],
    [546, "HAUPTSPEISEN / MAIN COURSES", 1132],
    [634, "GETRÄNKE / BEVERAGES", 1117],
  ] as [number, string, number][]).flatMap(([y, s, x2]) => [
    r(1052, y - 11, 1305, y + 11, "#e0e0e0", "#555555"),
    t(1056, x2, y, 3.8, s, "#111111", "b"),
  ]),
  ...([
    [481, "1", "Carpaccio von der Tiroler Wildspargel mit Parmesanspäne", 1198, "2", "18,50 €", "10%", "37,00 €"],
    [513, "2", "Kürbiscremesuppe mit gerösteten Kürbiskernöl", 1184, "2", "9,80 €", "10%", "19,60 €"],
    [569, "3", "Rinderfilet auf Pfeffer-Art auf Petersilienkartoffeln", 1186, "2", "34,50 €", "10%", "69,00 €"],
    [602, "4", "Saibling-Filet auf Lauch-Risotto mit Kräuteröl", 1176, "2", "28,90 €", "10%", "57,80 €"],
    [657, "5", "Römerquelle Vöslauer Alpinstill 0,75l", 1158, "4", "6,20 €", "10%", "24,80 €"],
    [679, "6", "Grüner Veltliner Weingut Meister 0,75l", 1161, "1", "32,90 €", "20%", "32,90 €"],
  ] as [number, string, string, number, string, string, string, string][]).flatMap(([y, n, s, x2, m, e, u, g]) => [
    t(1061, 1064, y, 3.8, n),
    t(1076, x2, y, 3.8, s, "#111111", "b"),
    t(1212, 1215, y, 3.8, m),
    t(1236, 1251, y, 3.8, e),
    t(1262, 1270, y, 3.8, u),
    t(1286, 1302, y, 3.8, g, "#111111", "b"),
  ]),
  ...[492, 525, 581, 613].map((y) => t(1076, 1117, y, 3, "Allergene: A, C, G, L", GREY, "i")),
  r(1052, 501, 1305, 502.5, "#555555"),
  r(1052, 589, 1305, 590.5, "#555555"),
  r(1052, 667, 1305, 668, "#888888"),
  r(1052, 689, 1305, 692, "#333333"),
  r(1224, 424, 1225, 534, "#444444"),
  r(1274, 424, 1275, 534, "#444444"),
  r(1224, 557, 1225, 622, "#444444"),
  r(1274, 557, 1275, 622, "#444444"),
  r(1224, 645, 1225, 690, "#444444"),
  r(1274, 645, 1275, 690, "#444444"),
];

const immo: Shape[] = [
  r(250, 60, 255, 82, "#1e5aa8"),
  r(245, 70, 262, 82, "#1e3a6e"),
  t(260, 279, 67, 3.8, "ALPEN", "#1e5aa8", "b"),
  t(256, 294, 76, 3.8, "IMMOBILIEN", "#1e5aa8", "b"),
  t(244, 294, 87, 4, "MANAGEMENT GmbH", "#1e5aa8", "b"),
  t(261, 276, 95, 2.8, "AUSTRIA", GREY),
  t(239, 409, 131, 6, "Alpen Immobilien Management GmbH", NAVY, "b"),
  ...lines(239, 4, INK, [
    [284, 158, "Leopoldstraße 103"],
    [302, 172, "6020 Innsbruck, Österreich"],
    [290, 185, "Tel: +43 512 580 674"],
    [336, 198, "E-Mail: office@alpen-immobilien-mgmt.at"],
    [327, 212, "Web: www.alpen-immobilien-mgmt.at"],
    [284, 225, "UID: ATU56874123"],
  ]),
  r(239, 244, 538, 300, "#f8f9fb", "#eceff3"),
  r(239, 244, 241, 300, NAVY),
  t(245, 364, 259, 3.8, "Immobilientreuhänder-Berechtigung: Nr. IT-2018-0047", NAVY, "b"),
  t(245, 363, 272, 3.5, "ÖVI-Mitglied Nr. 287 | Ausgezeichneter Immobilien-Treuhänder"),
  t(245, 384, 286, 3.5, "Betriebshaftpflichtversicherung: UNIQA Polizze Nr. IM-2025-7812944"),
  r(239, 317, 538, 318, "#edf0f3"),
  r(239, 342, 538, 454, "#f8f9fb", "#eceff3"),
  t(306, 471, 373, 7, "VERWALTUNGSABRECHNUNG", "#1e3a6e", "b"),
  t(323, 455, 404, 4.7, "Objektverwaltung & Betriebskostenabrechnung", GREY),
  t(351, 427, 426, 4.7, "Q2/2025 (April - Juni 2025)", GREY),
  r(239, 479, 383, 627, "#fcfcfd", "#e4e7eb"),
  r(396, 479, 538, 627, "#fcfcfd", "#e4e7eb"),
  t(246, 323, 499, 4.2, "VERWALTUNGSOBJEKT", NAVY, "b"),
  t(402, 493, 499, 4.2, "EIGENTUMSGEMEINSCHAFT", NAVY, "b"),
  r(246, 512, 377, 515, "#cdd6e4"),
  r(402, 512, 532, 515, "#cdd6e4"),
  t(246, 318, 528, 4.1, "Wohnanlage Alpenpanorama", NAVY, "b"),
  t(402, 455, 528, 4.1, "WEG Alpenpanorama", NAVY, "b"),
  ...lines(246, 4.1, INK, [
    [333, 547, "Panoramaweg 12-16, 6020 Innsbruck"],
    [323, 565, "24 Wohneinheiten | Baujahr 2018"],
    [312, 584, "Objekttyp: Mehrfamilienhaus"],
    [356, 603, "Verwaltungsvertrag-Nr.: VWV-2022-00455"],
  ]),
  ...lines(402, 4.1, INK, [
    [510, 547, "Mag. Elisabeth Hauser (Verwaltungsbeirat)"],
    [482, 565, "c/o Alpen Immobilien Management"],
    [437, 584, "6020 Innsbruck"],
    [448, 603, "UID: ATU87123456"],
  ]),
  r(239, 651, 536, 708, "#1e3a5f"),
  ...([
    [246, 288, "RECHNUNGSNR.", 246, 291, "VWA-2025-00489"],
    [315, 365, "RECHNUNGSDATUM", 325, 354, "28.08.2025"],
    [392, 456, "ABRECHNUNGSZEITRAUM", 388, 460, "Q2/2025 (April - Juni 2025)"],
    [483, 533, "FÄLLIGKEITSDATUM", 494, 523, "27.09.2025"],
  ] as [number, number, string, number, number, string][]).flatMap(([a, b, s, c, d, v]) => [
    t(a, b, 668, 3.4, s, "#d8e0ea"),
    t(c, d, 688, 4, v, "#ffffff", "b"),
  ]),
];

const energie: Shape[] = [
  t(1029, 1206, 67, 5.6, "Erneuerbare-Energie-Gemeinschaft Alpental", NAVY, "b"),
  t(1029, 1148, 92, 4.2, "E-Control Registrierung: EEG-AT-2024-0047-T/01", GREY),
  r(1270, 55, 1328, 103, "#f8f9fb", "#e8ebef"),
  t(1287, 1310, 72, 3.7, "EEG Logo", GREY),
  t(1289, 1309, 85, 3.7, "100×60px", GREY),
  t(1029, 1076, 116, 4, "Energiecampus 12", INK, "b"),
  ...lines(1029, 4, INK, [
    [1091, 129, "6020 Innsbruck, Österreich"],
    [1167, 142, "Tel: +43 512 555 890 | E-Mail: abrechnung@eeg-alpental.at"],
    [1091, 156, "Web: www.eeg-alpental.at"],
    [1074, 169, "UID: ATU76543218"],
  ]),
  r(1029, 192, 1329, 195, "#a9b7c9"),
  t(1029, 1073, 227, 4.7, "Mitgliedsdaten", NAVY, "b"),
  t(1185, 1243, 227, 4.7, "Abrechnungsdaten", NAVY, "b"),
  r(1029, 242, 1173, 383, "#f8f9fb", "#e4e8ed"),
  r(1185, 242, 1329, 380, "#f8f9fb", "#e4e8ed"),
  t(1036, 1124, 262, 4.2, "Mitglied-Nr: EEG-ALT-2024-0089", NAVY, "b"),
  ...lines(1036, 4.2, INK, [
    [1102, 282, "Mag. Dr. Elisabeth Hochleitig"],
    [1091, 301, "Photovoltaikgasse 17"],
    [1076, 321, "6020 Innsbruck"],
    [1102, 340, "Anlagentyp: Verbraucherin"],
    [1085, 360, "Beitritt: 15.03.2024"],
  ]),
  t(1191, 1296, 262, 4.2, "Rechnung-Nr: EEG-ALT-2025-Q3-0089", NAVY, "b"),
  ...lines(1191, 4.2, INK, [
    [1268, 282, "Rechnungsdatum: 28.08.2025"],
    [1319, 301, "Abrechnungszeitraum: Q3/2025 (Juli - September"],
    [1206, 318, "2025)"],
    [1252, 338, "Zahlbar bis: 27.09.2025"],
    [1275, 357, "Zahlungsart: SEPA-Überweisung"],
  ]),
  t(1029, 1142, 418, 5, "Energiebilanz nach ElWOG §16e", NAVY, "b"),
  ...([
    [1029, 1124, "Gesamtverbrauch", 1057, 1099, "1820", "kWh"],
    [1131, 1226, "EEG-Bezug", 1164, 1193, "1285", "kWh"],
    [1234, 1329, "Autarkiegrad", 1266, 1296, "70,6", "%"],
  ] as [number, number, string, number, number, string, string][]).flatMap(([a, b, s, c, d, v, u]) => [
    r(a, 446, b, 524, "#f8f9fb", "#e4e8ed"),
    t(c, d, 467, 4, s, GREY),
    t((a + b) / 2 - 8, (a + b) / 2 + 8, 488, 5.4, v, NAVY, "b"),
    t((a + b) / 2 - 4, (a + b) / 2 + 4, 505, 3.6, u, GREY),
  ]),
  t(1029, 1115, 558, 5, "Leistungen und Entgelte", NAVY, "b"),
  r(1029, 574, 1329, 576, "#e4e8ed"),
  r(1029, 588, 1329, 622, NAVY),
  t(1033, 1067, 604, 4.1, "Beschreibung", "#ffffff", "b"),
  t(1183, 1198, 604, 4.1, "Menge", "#ffffff", "b"),
  t(1227, 1255, 604, 4.1, "Einzelpreis", "#ffffff", "b"),
  t(1272, 1282, 604, 4.1, "USt", "#ffffff", "b"),
  t(1302, 1321, 604, 4.1, "Gesamt", "#ffffff", "b"),
  t(1033, 1156, 637, 3.9, "EEG-Grundgebühr Mitgliedschaft (3 Monate Q3/2025)"),
  t(1219, 1222, 637, 3.9, "3"),
  t(1252, 1267, 637, 3.9, "€ 8,00"),
  t(1286, 1296, 637, 3.9, "20%", GREY),
  t(1303, 1325, 637, 3.9, "€ 24,00", GREY),
  r(1029, 652, 1329, 697, "#f8f9fb"),
  t(1033, 1161, 667, 3.9, "Energiebezug aus EEG-Erzeugung (1285 kWh à 0,118"),
  t(1033, 1050, 681, 3.9, "€/kWh)"),
  t(1198, 1222, 674, 3.9, "1285 kWh", GREY),
  t(1242, 1267, 674, 3.9, "€ 0,118", GREY),
  t(1286, 1296, 674, 3.9, "20%", GREY),
  t(1322, 1325, 667, 3.9, "€", GREY),
  t(1307, 1325, 681, 3.9, "151,63", GREY),
];

const startup: Shape[] = [
  t(423, 622, 120, 10, "DigitalCraft Solutions", BLUE),
  t(422, 652, 149, 4.8, "Innovative Software Engineering für den Mittelstand", "#64748b"),
  ...lines(422, 4.3, "#64748b", [
    [576, 183, "office@digitalcraft.at | +43 1 205 55 43"],
    [495, 198, "www.digitalcraft.at"],
  ]),
  ...lines(422, 3.7, "#94a3b8", [
    [549, 222, "FN 456789k | Handelsgericht Wien"],
    [496, 235, "UID: ATU98765432"],
  ]),
  t(881, 940, 111, 6, "Rechnung", "#1e293b", "b"),
  t(839, 940, 146, 6, "DC-2025-0234", BLUE, "b"),
  ...linesR(940, 4.2, "#334155", [
    [821, 174, "Rechnungsdatum: 28.08.2025"],
    [765, 191, "Leistungszeitraum: 01.08.2025 – 31.08.2025"],
    [828, 209, "Fälligkeitsdatum: 11.09.2025"],
  ]),
  t(422, 531, 312, 4, "RECHNUNGSEMPFÄNGER", "#475569"),
  r(422, 329, 940, 471, "#f8fafc", "#e8edf3"),
  r(422, 329, 425, 471, BLUE),
  t(441, 606, 359, 5.5, "InnovateNow Holding GmbH", "#1e293b", "b"),
  t(441, 635, 383, 4.3, "Dr. Marie Schneider | CTO & Technical Lead", "#64748b"),
  t(441, 519, 408, 4.1, "Mariahilfer Straße 103", "#64748b"),
  t(441, 534, 425, 4.1, "1060 Wien, Österreich", "#475569"),
  t(441, 524, 447, 3.9, "UID: ATU98765442", "#64748b"),
  r(422, 511, 940, 570, "#eff6ff", "#cfe0fb"),
  t(434, 615, 532, 4.7, "Projekt: Digital Platform Modernization", "#1e40af", "b"),
  t(434, 598, 551, 4.2, "Phase 2: Core Development | Q3/Q4 2025", BLUE),
  t(422, 534, 612, 5, "Erbrachte Leistungen", "#1e293b", "b"),
  r(422, 627, 534, 630, "#5f8cf0"),
  r(422, 650, 939, 689, "#f8fafc"),
  ...([
    [431, 449, "POS."],
    [468, 537, "BESCHREIBUNG"],
    [709, 741, "MENGE"],
    [759, 816, "EINZELPREIS"],
    [833, 860, "MWST."],
    [880, 913, "BETRAG"],
  ] as [number, number, string][]).map(([a, b, s]) => t(a, b, 668, 3.7, s, "#475569", "b")),
  t(439, 443, 712, 4.2, "1", "#334155"),
  t(468, 657, 712, 4.2, "Frontend-Entwicklung React/TS Application", "#1e293b", "b"),
  t(468, 691, 731, 3.9, "Entwicklung der Benutzeroberfläche mit modernem React", "#64748b"),
  t(713, 740, 712, 4.2, "48 Std.", "#334155"),
  t(785, 816, 712, 4.2, "€ 95,00", "#334155"),
  t(838, 857, 712, 4.2, "20%", "#334155"),
  t(882, 931, 712, 4.2, "€ 4.560,00", "#1e293b", "b"),
];

/* ---------- page data ---------- */

type Template = {
  title: string;
  branch: string;
  text: React.ReactNode;
  tags: React.ReactNode[];
  grid: Grid;
  shapes: Shape[];
};

const CO2 = (
  <>
    CO<span className="relative top-[0.25em] text-[0.6em] leading-none">2</span>
  </>
);

const cell = (ox: number, oy: number, sy: number, sx = 1.4): Grid => ({ ox, oy, sx, sy });

const templates: Template[] = [
  {
    title: "Handwerker Classic",
    branch: "Elektrotechnik & Traditionelles Handwerk",
    text: (
      <>
        Traditionelle Rechnungsvorlage für österreichische Meisterbetriebe. Ideal
        <br />
        für Elektriker, Installateure und klassische Handwerksbetriebe mit Smart-
        <br />
        Home Integration.
      </>
    ),
    tags: ["Meisterbetrieb", "WKO Tirol", "Handwerkerbonus", "Smart-Home"],
    grid: cell(11, 50, 2.613),
    shapes: handwerker,
  },
  {
    title: "Solar PV Modern",
    branch: "Photovoltaik & Erneuerbare Energien",
    text: (
      <>
        Moderne Vorlage für Solarunternehmen mit technischer Dokumentation.
        <br />
        Perfekt für PV-Anlagen, Speichersysteme und nachhaltige
        <br />
        Energielösungen.
      </>
    ),
    tags: ["klimaaktiv", "TÜV Austria", "ÖVE-Zertifikat", "BYD Speicher"],
    grid: cell(801, 50, 2.613),
    shapes: solar,
  },
  {
    title: "IT Professional",
    branch: "Software Development & IT Consulting",
    text: (
      <>
        Enterprise-grade Vorlage für IT-Dienstleister. Speziell für
        <br />
        Softwareentwicklung, Systemarchitektur und digitale Transformation.
      </>
    ),
    tags: ["ISO 27001", "Agile/Scrum", "DevOps", "Enterprise"],
    grid: cell(11, 50, 2.613),
    shapes: itPro,
  },
  {
    title: "Kleinunternehmer Minimal",
    branch: "Steuerberatung & Kleinbetriebe",
    text: (
      <>
        Einfache, persönliche Vorlage für Kleinunternehmer unter €55.000
        <br />
        Jahresumsatz. Perfekt für Steuerberater, Freelancer und kleine
        <br />
        Dienstleister.
      </>
    ),
    tags: ["Kleinunternehmer", "€55.000 Schwelle", "Persönlich", "Umsatzsteuerfrei"],
    grid: cell(801, 50, 2.613),
    shapes: klein,
  },
  {
    title: "B2B Reverse Charge EU",
    branch: "Grenzüberschreitende EU-Geschäfte",
    text: (
      <>
        Professionelle Vorlage für EU-weite B2B-Dienstleistungen mit Reverse-
        <br />
        Charge-Verfahren. VIES-validiert und mehrsprachig (DE/EN).
      </>
    ),
    tags: ["Reverse Charge", "VIES-Validierung", "EU B2B", "DE/EN"],
    grid: cell(11, 52, 2.613),
    shapes: b2b,
  },
  {
    title: "Beratung Premium",
    branch: "Management Consulting & Strategieberatung",
    text: (
      <>
        Hochwertige Executive-Vorlage für Unternehmensberatung. Für
        <br />
        strategische Projekte, digitale Transformation und Management-
        <br />
        Consulting.
      </>
    ),
    tags: ["Executive Level", "ISO 20700", "CMC Certified", "€2M Haftung"],
    grid: cell(801, 52, 2.613),
    shapes: beratung,
  },
  {
    title: "Tourismus Dreisprachig",
    branch: "Hotellerie & Tourismus (DE/EN/IT)",
    text: (
      <>
        4-Sterne Superior Hotel-Vorlage mit drei Sprachen. Ideal für Tiroler
        <br />
        Tourismusbetriebe mit internationaler Kundschaft.
      </>
    ),
    tags: ["DE/EN/IT", "4★ Superior", "Green Key", "Ortstaxe"],
    grid: cell(11, 54, 2.703),
    shapes: tourismus,
  },
  {
    title: "Bau VOB Abschlag",
    branch: "Baugewerbe & Teilrechnungen",
    text: (
      <>
        Spezialisierte Baugewerbe-Vorlage nach ÖNORM B 2110 mit
        <br />
        Abschlagsrechnungen. Für Großprojekte und mehrstufige Bauvorhaben.
      </>
    ),
    tags: ["ÖNORM B 2110", "Abschlagsrechnung", "Haftrücklass", "Baumeister"],
    grid: cell(801, 54, 2.703),
    shapes: bau,
  },
  {
    title: "Freelancer Creative",
    branch: "Brand Design & Visual Communication",
    text: (
      <>
        Kreative Designstudio-Vorlage mit professioneller Brand-Identity-
        <br />
        Entwicklung. Für Grafiker, Designer und Creative Agencies.
      </>
    ),
    tags: ["ADC Austria", "Brand Strategy", "Nutzungsrechte", "Portfolio"],
    grid: cell(11, 49, 2.703),
    shapes: freelancer,
  },
  {
    title: "E-Commerce Modern",
    branch: "Online-Handel & B2B E-Commerce",
    text: (
      <>
        Moderne E-Commerce-Vorlage für B2B-Tech-Handel. Mit OSS-
        <br />
        Verfahren, Cross-Selling und professionellem Kundenservice.
      </>
    ),
    tags: ["OSS-Verfahren", "Trusted Shops", "B2B Portal", "Tracking"],
    grid: cell(801, 49, 2.703),
    shapes: ecommerce,
  },
  {
    title: "Rechtsanwalt Formal",
    branch: "Anwaltskanzlei & Rechtsdienste",
    text: (
      <>
        Formal-juristische Honorarnote nach RATG. Für Anwaltskanzleien mit
        <br />
        gerichtlicher und außergerichtlicher Vertretung.
      </>
    ),
    tags: ["RATG konform", "RAK Wien", "€2.18M Haftung", "Kostenersatz"],
    grid: cell(11, 43, 2.703),
    shapes: anwalt,
  },
  {
    title: "Gastgewerbe Restaurant",
    branch: "Gehobene Gastronomie & Bewirtung",
    text: (
      <>
        Elegante Gastronomie-Vorlage für gehobene Restaurants. Mit
        <br />
        Allergenkennzeichnung, Bewirtungsbelegen und WKO-Compliance.
      </>
    ),
    tags: ["HACCP", "Allergene", "Bewirtung", "WKO Gastronomie"],
    grid: cell(801, 43, 2.703),
    shapes: gastro,
  },
  {
    title: "Immobilienverwaltung",
    branch: "Hausverwaltung & WEG-Administration",
    text: (
      <>
        Professionelle WEG-Verwaltungsvorlage mit Betriebskosten, Rücklagen
        <br />
        und Umlageschlüsseln. ITG-konform mit 22-jähriger Aufbewahrung.
      </>
    ),
    tags: ["WEG-Verwaltung", "ITG konform", "Betriebskosten", "22 Jahre"],
    grid: cell(11, 39, 2.8),
    shapes: immo,
  },
  {
    title: "Energiegemeinschaft",
    branch: "Erneuerbare Energiegemeinschaft (EEG)",
    text: (
      <>
        Moderne EEG-Abrechnungsvorlage für lokale Energiegemeinschaften.
        <br />
        Mit Smart-Meter-Daten und {CO2}-Bilanzierung.
      </>
    ),
    tags: ["E-Control", "Smart Meter", <>{CO2}-Einsparung</>, "Community"],
    grid: cell(801, 39, 2.8),
    shapes: energie,
  },
  {
    title: "Startup Minimalist",
    branch: "Tech Startups & Digital Services",
    text: (
      <>
        Minimalistische Tech-Startup-Vorlage mit modernem Clean Design. Für
        <br />
        Softwareentwicklung und digitale Innovationen.
      </>
    ),
    tags: ["Clean Code", "ISO 27001", "DSGVO", "GitHub"],
    grid: cell(20, 62, 2.8, 2.45),
    shapes: startup,
  },
];

const stats = [
  ["15", "Branchenvorlagen"],
  ["100%", "UStG §11 konform"],
  ["A4", "Druckoptimiert"],
  ["AI", "KI-generiert"],
];

/* ---------- components ---------- */

function InfoBox({ title, children }: { title: string; children: React.ReactNode }) {
  return (
    <section className="bg-[#f8f8f8] p-[18.1px] text-center shadow-[0_3px_7px_rgba(30,50,80,0.09)]">
      <h3 className="text-[14.1px] leading-[21.2px] font-bold text-[#1a3b78]">{title}</h3>
      <p className="mt-[6px] text-[12.08px] leading-[18.1px] whitespace-nowrap">{children}</p>
    </section>
  );
}

function Card({ item, index }: { item: Template; index: number }) {
  return (
    <article className="bg-[#f8f8f8] shadow-[0_6px_18px_rgba(30,45,75,0.15)]">
      <Preview grid={item.grid} shapes={item.shapes} label={item.title} />
      <div className="p-[18.1px]">
        <div className="flex h-[69.4px] items-start justify-between">
          <div className="pt-[5.8px]">
            <h3 className="text-[15.5px] leading-[23.2px] font-bold text-[#1a3b78]">{item.title}</h3>
            <p className="mt-[2.2px] text-[10.9px] leading-[16.3px]">{item.branch}</p>
          </div>
          <span className="mt-[5.3px] flex h-[24px] w-[30.2px] items-center justify-center bg-[#1a3b78] text-[10.2px] font-bold">
            {String(index + 1).padStart(2, "0")}
          </span>
        </div>
        <p className="text-[11.48px] leading-[17px] whitespace-nowrap">{item.text}</p>
        <div className="flex h-[46.2px] items-center gap-[6px]">
          {item.tags.map((tag, i) => (
            <span key={i} className="px-[9px] text-[9.75px] leading-[15px] whitespace-nowrap text-[#666666]">
              {tag}
            </span>
          ))}
        </div>
        <div className="flex gap-[9px]">
          <a className="flex h-[36.1px] w-[114.8px] items-center justify-center bg-[#1a3b78] text-[10.95px] font-bold">
            HTML ansehen
          </a>
          <a className="flex h-[36.1px] items-center px-[18.1px] text-[10.95px] font-bold text-[#1a3b78]">
            PDF herunterladen
          </a>
        </div>
      </div>
    </article>
  );
}

export default function App() {
  return (
    <div className="min-h-[4096px] bg-[#f8f8f8] font-['Liberation_Sans',Arial,sans-serif] text-[#333333]">
      <header className="relative border-b border-[#c8cacc] bg-white pt-[24.15px] pb-[24px] text-center shadow-[0_2px_6px_rgba(0,0,0,0.1)]">
        <h1 className="text-[30.2px] leading-[45.3px] font-bold text-[#1a3b78]">Österreichische Rechnungsvorlagen</h1>
        <p className="mt-[6px] text-[14.5px] leading-[21.7px] text-[#666666]">
          Professional Invoice Templates for Austrian Businesses
        </p>
        <p className="mt-[12px] text-[12.08px] leading-[18.1px]">
          Rechtskonforme HTML-Vorlagen nach österreichischem UStG §11 mit AI-generierter Anpassung
        </p>
        <div className="mt-[18.2px] flex justify-center gap-[24.1px]">
          {stats.map(([value, label]) => (
            <div
              key={label}
              className="bg-white px-[12.1px] py-[18.1px] shadow-[0_3px_7px_rgba(30,50,80,0.09)]"
            >
              <div className="text-[21.7px] leading-[32.6px] font-bold text-[#1a3b78]">{value}</div>
              <div className="mt-[3px] text-[10.87px] leading-[16.3px] text-[#666666]">{label}</div>
            </div>
          ))}
        </div>
      </header>

      <main className="px-[66.4px] pt-[24px] pb-[36.2px]">
        <InfoBox title="Rechtliche Compliance">
          Alle Vorlagen entsprechen dem österreichischen Umsatzsteuergesetz (UStG §11) und enthalten die neun
          Pflichtangaben für rechtskonforme
          <br />
          Rechnungsstellung.
        </InfoBox>

        <div className="mt-[24.2px] mb-[35.4px] grid grid-cols-2 gap-[18.1px]">
          {templates.map((item, i) => (
            <Card key={item.title} item={item} index={i} />
          ))}
        </div>

        <InfoBox title="Media Assets & AI-Generierung">
          Alle Vorlagen können mit dem{" "}
          <code className="font-['Liberation_Mono',monospace] text-[12.08px]">/image_generation/</code> System
          professionelle Logos, Icons und Wasserzeichen generieren lassen. Nutzen Sie
          <br />
          OpenAI's gpt-image-1 für hochqualitative, branchen-spezifische Medien-Assets.
        </InfoBox>
      </main>

      <footer className="bg-[#1a3b78] pt-[24.1px] pb-[24.1px] text-center text-[12.08px] leading-[18.1px]">
        <h3 className="text-[14.1px] leading-[21.2px] font-bold">Made for Austrian Business</h3>
        <p>Entwickelt mit tiefem Verständnis für österreichische Geschäftsanforderungen und Steuerrecht.</p>
        <p className="mt-[12.1px] font-bold">UStG §11 konform • Alle Branchen • AI-powered • Druckoptimiert</p>
      </footer>
    </div>
  );
}
